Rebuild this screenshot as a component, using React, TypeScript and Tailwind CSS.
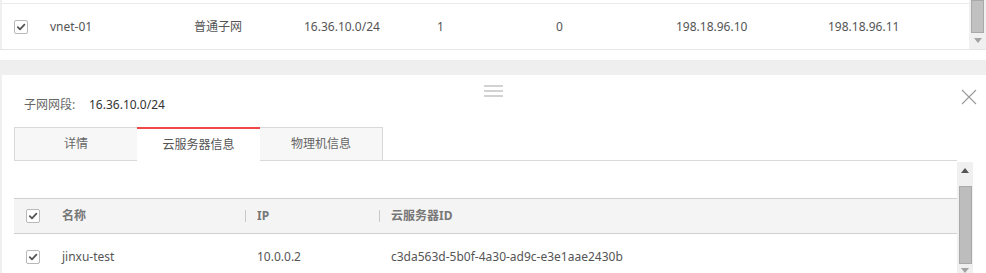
import React from "react";

const FONT = "font-['Noto_Sans','Noto_Sans_CJK_SC',sans-serif]";

function Check() {
  return (
    <span className="flex h-[14px] w-[14px] items-center justify-center rounded-[2px] border border-[#b8b8b8] bg-white">
      <svg width="10" height="10" viewBox="0 0 10 10" fill="none">
        <path d="M1.8 5.2 L4 7.4 L8.4 2.6" stroke="#555" strokeWidth="1.8" strokeLinecap="round" strokeLinejoin="round" />
      </svg>
    </span>
  );
}

function Arrow({ up }: { up?: boolean }) {
  return (
    <svg width="8" height="5" viewBox="0 0 8 5">
      {up ? <path d="M0 5 L4 0 L8 5 Z" fill="#555" /> : <path d="M0 0 L4 5 L8 0 Z" fill="#a3a3a3" />}
    </svg>
  );
}

// columns of the subnet list row
const TOP_COLS = [
  { text: "vnet-01", w: "w-[144px]" },
  { text: "普通子网", w: "w-[110px]" },
  { text: "16.36.10.0/24", w: "w-[133px]" },
  { text: "1", w: "w-[119px]" },
  { text: "0", w: "w-[120px]" },
  { text: "198.18.96.10", w: "w-[152px]" },
  { text: "198.18.96.11", w: "w-[130px]" },
];

const TABS = ["详情", "云服务器信息", "物理机信息"];

export default function App() {
  return (
    <div className={`flex h-[273px] w-[986px] flex-col overflow-hidden bg-white text-[12px] ${FONT}`}>
      {/* subnet list (top) */}
      <div className="flex h-[50px] shrink-0 border-b border-[#e6e6e6]">
        <div className="w-[2px] bg-[#efefef]" />
        <div className="flex-1 pt-[3px]">
          <div className="flex h-[46px] items-center border-t border-[#ebebeb] pl-[12px] text-[#555]">
            <div className="w-[36px]">
              <Check />
            </div>
            {TOP_COLS.map((c) => (
              <div key={c.text} className={`${c.w} whitespace-nowrap`}>
                {c.text}
              </div>
            ))}
          </div>
        </div>
        <div className="flex w-[17px] flex-col items-center bg-[#f0f0f0]">
          <div className="h-[33px] w-[13px] border border-[#a9a9a9] bg-[#c1c1c1]" />
          <div className="mt-[5px]">
            <Arrow />
          </div>
        </div>
      </div>
      <div className="h-[10px] shrink-0" />
      <div className="h-[15px] shrink-0 bg-[#efefef]" />

      {/* detail panel */}
      <div className="flex flex-1">
        <div className="w-[2px] bg-[#efefef]" />
        <div className="relative flex-1 pt-[21px]">
          {/* drag handle */}
          <div className="absolute left-[482px] top-[10px] flex w-[19px] flex-col gap-[3px]">
            <div className="h-[2px] bg-[#d2d2d2]" />
            <div className="h-[2px] bg-[#d2d2d2]" />
            <div className="h-[2px] bg-[#d2d2d2]" />
          </div>
          {/* close */}
          <svg className="absolute left-[959px] top-[14px]" width="16" height="16" viewBox="0 0 16 16">
            <path d="M1 1 L15 15 M15 1 L1 15" stroke="#9a9a9a" strokeWidth="1.1" />
          </svg>

          <div className="flex h-[18px] items-center pl-[22px] leading-[18px]">
            <span className="w-[65px] text-[#666]">子网网段:</span>
            <span className="text-[#333]">16.36.10.0/24</span>
          </div>

          <div className="ml-[12px] mt-[13px] flex w-[943px] items-end border-b border-[#d9d9d9]">
            {TABS.map((t, i) =>
              i === 1 ? (
                <div
                  key={t}
                  className="-mb-px flex h-[34px] w-[123px] items-center justify-center border-t-2 border-[#f04848] bg-white text-[#555]"
                >
                  {t}
                </div>
              ) : (
                <div
                  key={t}
                  className={`flex h-[33px] w-[123px] items-center justify-center border-t border-[#d9d9d9] bg-[#f7f7f7] text-[#666] ${
                    i === 0 ? "border-l" : "border-r"
                  }`}
                >
                  {t}
                </div>
              )
            )}
          </div>

          <div className="ml-[12px] flex">
            <div className="w-[943px] pt-[37px]">
              <div className="flex h-[36px] items-center border-y border-[#d0d0d0] bg-[#f4f4f4] pl-[12px] font-bold text-[#777]">
                <div className="w-[36px]">
                  <Check />
                </div>
                <div className="w-[183px]">名称</div>
                <div className="flex w-[134px] items-center">
                  <span className="mr-[11px] h-[12px] w-px bg-[#c8c8c8]" />
                  IP
                </div>
                <div className="flex items-center">
                  <span className="mr-[11px] h-[12px] w-px bg-[#c8c8c8]" />
                  云服务器ID
                </div>
              </div>
              <div className="flex h-[46px] items-center pl-[12px] text-[#555]">
                <div className="w-[36px]">
                  <Check />
                </div>
                <div className="w-[195px]">jinxu-test</div>
                <div className="w-[134px]">10.0.0.2</div>
                <div>c3da563d-5b0f-4a30-ad9c-e3e1aae2430b</div>
              </div>
            </div>
            <div className="mt-[1px] flex w-[16px] flex-col items-center bg-[#f0f0f0]">
              <div className="mt-[6px]">
                <Arrow up />
              </div>
              <div className="mt-[13px] h-[78px] w-[13px] border border-[#a9a9a9] bg-[#bdbdbd]" />
              <div className="mt-[4px]">
                <Arrow />
              </div>
            </div>
          </div>
        </div>
      </div>
    </div>
  );
}
